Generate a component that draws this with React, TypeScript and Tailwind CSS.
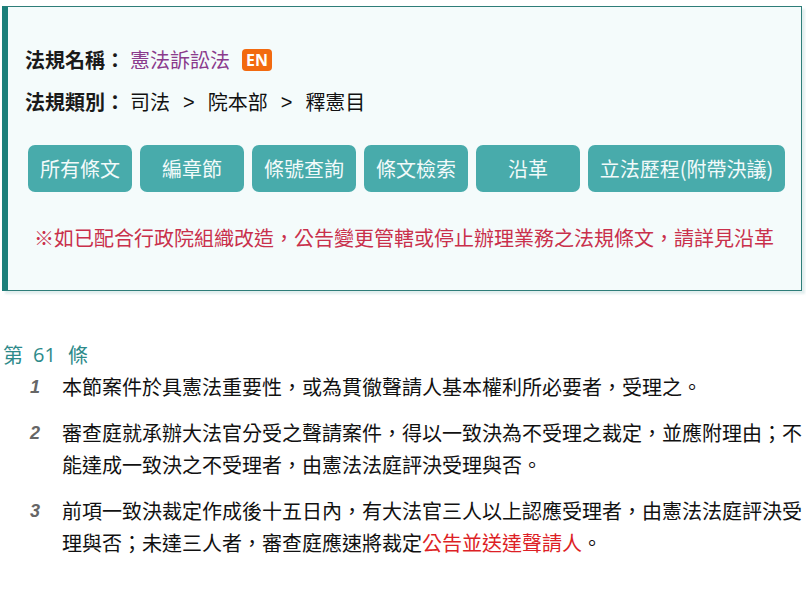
import React from "react";

const cjk = "font-['Noto_Sans_CJK_TC','Noto_Sans_CJK_JP',sans-serif]";

const buttons = ["所有條文", "編章節", "條號查詢", "條文檢索", "沿革", "立法歷程(附帶決議)"];

export default function App() {
  return (
    <div className={`w-[806px] h-[608px] bg-white text-[20px] text-[#111] ${cjk} overflow-hidden`}>
      {/* Law header box */}
      <div className="mt-[6px] ml-[2px] w-[800px] bg-[#f4fbfb] border border-[#2e7d79] border-l-[6px] border-l-[#1b7f7a] shadow-[3px_3px_2px_rgba(60,140,140,0.15)] pl-[17px] pr-4 pt-[32px] pb-[37px]">
        <div className="flex items-center h-[42px] leading-[42px]">
          <span className="font-bold text-[#1a1a1a]">法規名稱：</span>
          <span className="ml-[5px] text-[#8a3a8c]">憲法訴訟法</span>
          <span className="ml-[12px] h-[22px] px-[4px] rounded-[4px] bg-[#f26a10] text-white text-[16px] leading-[22px] font-bold font-['Open_Sans',sans-serif]">
            EN
          </span>
        </div>
        <div className="flex items-center h-[42px] leading-[42px]">
          <span className="font-bold text-[#1a1a1a]">法規類別：</span>
          <span className="ml-[5px]">司法</span>
          <span className="mx-[13px] font-['Liberation_Sans',sans-serif]">&gt;</span>
          <span>院本部</span>
          <span className="mx-[13px] font-['Liberation_Sans',sans-serif]">&gt;</span>
          <span>釋憲目</span>
        </div>

        <div className="flex gap-2 ml-[3px] mt-[22px]">
          {buttons.map((b) => (
            <div
              key={b}
              className="min-w-[104px] h-[47px] px-3 rounded-[7px] bg-[#48abab] text-[#f2fafa] flex items-center justify-center leading-none whitespace-nowrap"
            >
              {b}
            </div>
          ))}
        </div>

        <p className="mt-[31px] text-center leading-[30px] text-[#c9304b] -ml-[2px]">
          ※如已配合行政院組織改造，公告變更管轄或停止辦理業務之法規條文，請詳見沿革
        </p>
      </div>

      {/* Article */}
      <div className="mt-[48px]">
        <div className="flex pl-[3px] leading-8 text-[#2d8a8a]">
          <span>第</span>
          <span className="ml-[10px] font-['Open_Sans',sans-serif]">61</span>
          <span className="ml-[12px]">條</span>
        </div>
        <div className="flex flex-col gap-[14px]">
          <Item n="1">本節案件於具憲法重要性，或為貫徹聲請人基本權利所必要者，受理之。</Item>
          <Item n="2">
            審查庭就承辦大法官分受之聲請案件，得以一致決為不受理之裁定，並應附理由；不能達成一致決之不受理者，由憲法法庭評決受理與否。
          </Item>
          <Item n="3">
            前項一致決裁定作成後十五日內，有大法官三人以上認應受理者，由憲法法庭評決受理與否；未達三人者，審查庭應速將裁定
            <span className="text-[#dd1f26]">公告並送達聲請人</span>。
          </Item>
        </div>
      </div>
    </div>
  );
}

function Item({ n, children }: { n: string; children: React.ReactNode }) {
  return (
    <div className="flex">
      <span className="w-[62px] shrink-0 pl-[30px] leading-8 text-[18px] italic font-bold text-[#666] font-['Liberation_Sans',sans-serif]">
        {n}
      </span>
      <p className="flex-1 leading-8">{children}</p>
    </div>
  );
}
